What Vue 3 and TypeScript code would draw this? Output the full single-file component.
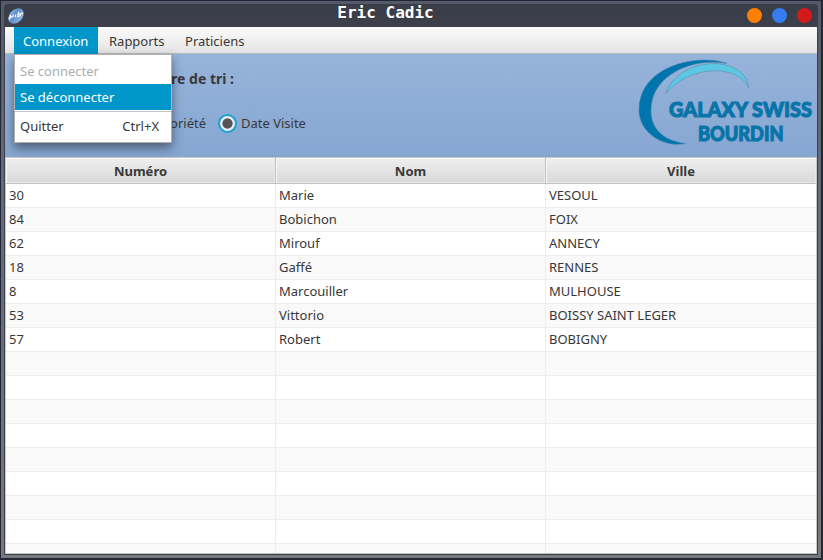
<script setup lang="ts">
interface Praticien {
  numero: number
  nom: string
  ville: string
}

const praticiens: Praticien[] = [
  { numero: 30, nom: 'Marie', ville: 'VESOUL' },
  { numero: 84, nom: 'Bobichon', ville: 'FOIX' },
  { numero: 62, nom: 'Mirouf', ville: 'ANNECY' },
  { numero: 18, nom: 'Gaffé', ville: 'RENNES' },
  { numero: 8, nom: 'Marcouiller', ville: 'MULHOUSE' },
  { numero: 53, nom: 'Vittorio', ville: 'BOISSY SAINT LEGER' },
  { numero: 57, nom: 'Robert', ville: 'BOBIGNY' },
]
const emptyRows = 9
const columns: string[] = ['Numéro', 'Nom', 'Ville']
</script>

<template>
  <div class="desktop">
    <div class="window">
      <header class="titlebar">
        <svg class="app-icon" width="16" height="16" viewBox="0 0 16 16">
          <defs>
            <linearGradient id="ball" x1="0" y1="0" x2="0.4" y2="1">
              <stop offset="0" stop-color="#a9c2e2" />
              <stop offset="0.5" stop-color="#5f8fcb" />
              <stop offset="1" stop-color="#8fb0dc" />
            </linearGradient>
          </defs>
          <ellipse cx="8" cy="8" rx="8.8" ry="6.400" transform="rotate(-45 8 8)" fill="url(#ball)" />
          <path d="M1 11.500L2.600 7.200L2.800 9.300L5 8.500L5.400 6.500M7.600 6.500L7.300 9.200M10.600 3.800L9.600 8.700L12.200 7.800L12.600 5.900L10.500 6.500M12.600 5.900L15 5.200" fill="none" stroke="#f4f7fc" stroke-width="1.2" />
        </svg>
        <h1 class="title">Eric Cadic</h1>
        <div class="controls">
          <span class="dot orange"></span>
          <span class="dot blue"></span>
          <span class="dot red"></span>
        </div>
      </header>

      <main class="content">
        <nav class="menubar">
          <div class="menu active">
            Connexion
            <div class="dropdown">
              <div class="item disabled">Se connecter</div>
              <div class="item selected">Se déconnecter</div>
              <div class="separator"></div>
              <div class="item"><span>Quitter</span><span>Ctrl+X</span></div>
            </div>
          </div>
          <div class="menu">Rapports</div>
          <div class="menu">Praticiens</div>
        </nav>

        <section class="banner">
          <div class="sorting">
            <h2 class="sort-title">re de tri :</h2>
            <div class="options">
              <span class="clipped">oriété</span>
              <label class="option"><span class="radio"></span>Date Visite</label>
            </div>
          </div>
          <svg class="logo" width="180" height="103" viewBox="637 54 180 103">
            <path d="M727 63.500C697 53 639 66 639 110C639 133 664 148 685.500 143.500C665 141 650 130 651 109C652 75 692 57 727 63.500Z" fill="#0075ad" stroke="#4281ab" stroke-width=".6" />
            <path d="M665.500 94C678 56 745 53 749 88.500C739 64 690 64 665.500 94Z" fill="#5bc7e3" stroke="#6388ae" stroke-width=".6" />
            <g fill="#0075ad" stroke="#0f75a9" stroke-width="1.200">
              <text x="669" y="116.600" textLength="143" lengthAdjust="spacingAndGlyphs">GALAXY SWISS</text>
              <text x="698" y="140.800" textLength="85.500" lengthAdjust="spacingAndGlyphs">BOURDIN</text>
            </g>
          </svg>
        </section>

        <section class="table">
          <div class="row head">
            <div v-for="c in columns" :key="c" class="cell">{{ c }}</div>
          </div>
          <div v-for="p in praticiens" :key="p.numero" class="row">
            <div class="cell">{{ p.numero }}</div>
            <div class="cell">{{ p.nom }}</div>
            <div class="cell">{{ p.ville }}</div>
          </div>
          <div v-for="n in emptyRows" :key="'e' + n" class="row">
            <div class="cell"></div>
            <div class="cell"></div>
            <div class="cell"></div>
          </div>
        </section>
      </main>
    </div>
  </div>
</template>

<style>
body {
  overflow: hidden;
}
</style>

<style scoped>
* {
  box-sizing: border-box;
}
.desktop {
  width: 823px;
  height: 560px;
  padding: 1px 2px 2px 1px;
  background: #232634;
  font: 13px/18px 'Noto Sans', sans-serif;
  color: #383838;
}
.window {
  height: 557px;
  padding: 3px;
  background: linear-gradient(#535968, #626976 25%, #696d76 60%, #78797c);
}
.titlebar {
  height: 23px;
  display: grid;
  grid-template-columns: 100px 1fr 100px;
  background: linear-gradient(#393d48, #3d404b);
  border-radius: 4px 4px 0 0;
}
.app-icon {
  margin: 4px 0 0 4px;
}
.title {
  margin: 0;
  color: #fff;
  text-align: center;
  font: bold 16px/18px 'DejaVu Sans Mono', monospace;
  padding-right: 51px;
}
.controls {
  display: flex;
  justify-content: flex-end;
  gap: 10px;
  padding: 4px 6px 0 0;
}
.dot {
  width: 15px;
  height: 15px;
  border-radius: 50%;
}
.orange {
  background: #ff8000;
}
.blue {
  background: #367bf0;
}
.red {
  background: #d41919;
}
.content {
  height: 528px;
  border: 1px solid #3d404b;
  border-top: 0;
  overflow: hidden;
  background: #fff;
}
.menubar {
  height: 27px;
  display: flex;
  padding-left: 9px;
  background: linear-gradient(#fbfbfb, #e4e4e4);
  border-bottom: 1px solid #b9b9b9;
}
.menu {
  height: 27px;
  padding: 5px 9.500px 0 11px;
  position: relative;
  white-space: nowrap;
}
.menu.active {
  width: 84px;
  padding: 5px 9px 0;
  background: #0096c9;
  color: #fff;
}
.dropdown {
  position: absolute;
  z-index: 2;
  left: 0;
  top: 27px;
  width: 158px;
  height: 89px;
  padding: 3px 0;
  background: #fff;
  border: 1px solid #b0b0b0;
  color: #383838;
  box-shadow: 0 5px 10px rgba(0, 0, 0, 0.45);
}
.item {
  height: 26px;
  padding: 4px 12px 0 5px;
  display: flex;
  justify-content: space-between;
}
.disabled {
  color: #adadad;
}
.selected {
  background: #0096c9;
  color: #fff;
}
.separator {
  height: 2px;
  margin-bottom: 1px;
  border-bottom: 1px solid #c2c2c2;
}
.banner {
  height: 103px;
  display: flex;
  justify-content: space-between;
  background: linear-gradient(#96b3da, #86a7d2);
}
.sorting {
  width: 320px;
}
.sort-title {
  margin: 15px 0 0;
  width: 229px;
  text-align: right;
  font: bold 14px/20px 'Noto Sans', sans-serif;
}
.options {
  display: flex;
  margin-top: 25px;
  padding-left: 96px;
}
.clipped {
  width: 105px;
  text-align: right;
  line-height: 19px;
}
.option {
  display: flex;
  align-items: center;
  gap: 4px;
  margin-left: 12px;
  height: 18px;
}
.radio {
  width: 19px;
  height: 19px;
  border: 2px solid #1ca1d0;
  border-radius: 50%;
  background: radial-gradient(circle, #555 0 4.700px, #e6eef3 5.500px);
}
.logo {
  flex: none;
  font: 900 20.700px Lato, sans-serif;
}
.table {
  height: 397px;
  border: 1px solid #c8c8c8;
  border-bottom-color: #bfc1c4;
  overflow: hidden;
}
.row {
  display: grid;
  grid-template-columns: 270px 270px 1fr;
  height: 24px;
  background: #fff;
  border-bottom: 1px solid #ededed;
}
.row:nth-child(odd) {
  background: #f9f9f9;
}
.cell {
  padding: 2px 0 0 3px;
  border-right: 1px solid #ededed;
}
.row .cell:last-child {
  border-right: 0;
}
.row.head {
  height: 26px;
  background: linear-gradient(#efefef, #d9d9d9);
  border-bottom: 1px solid #c2c2c2;
  font-weight: bold;
}
.head .cell {
  padding: 4px 0 0;
  text-align: center;
  border-right: 1px solid #c2c2c2;
  box-shadow: inset 1px 1px #f8f8f8, inset -1px -1px #e8e8e8;
}
</style>
